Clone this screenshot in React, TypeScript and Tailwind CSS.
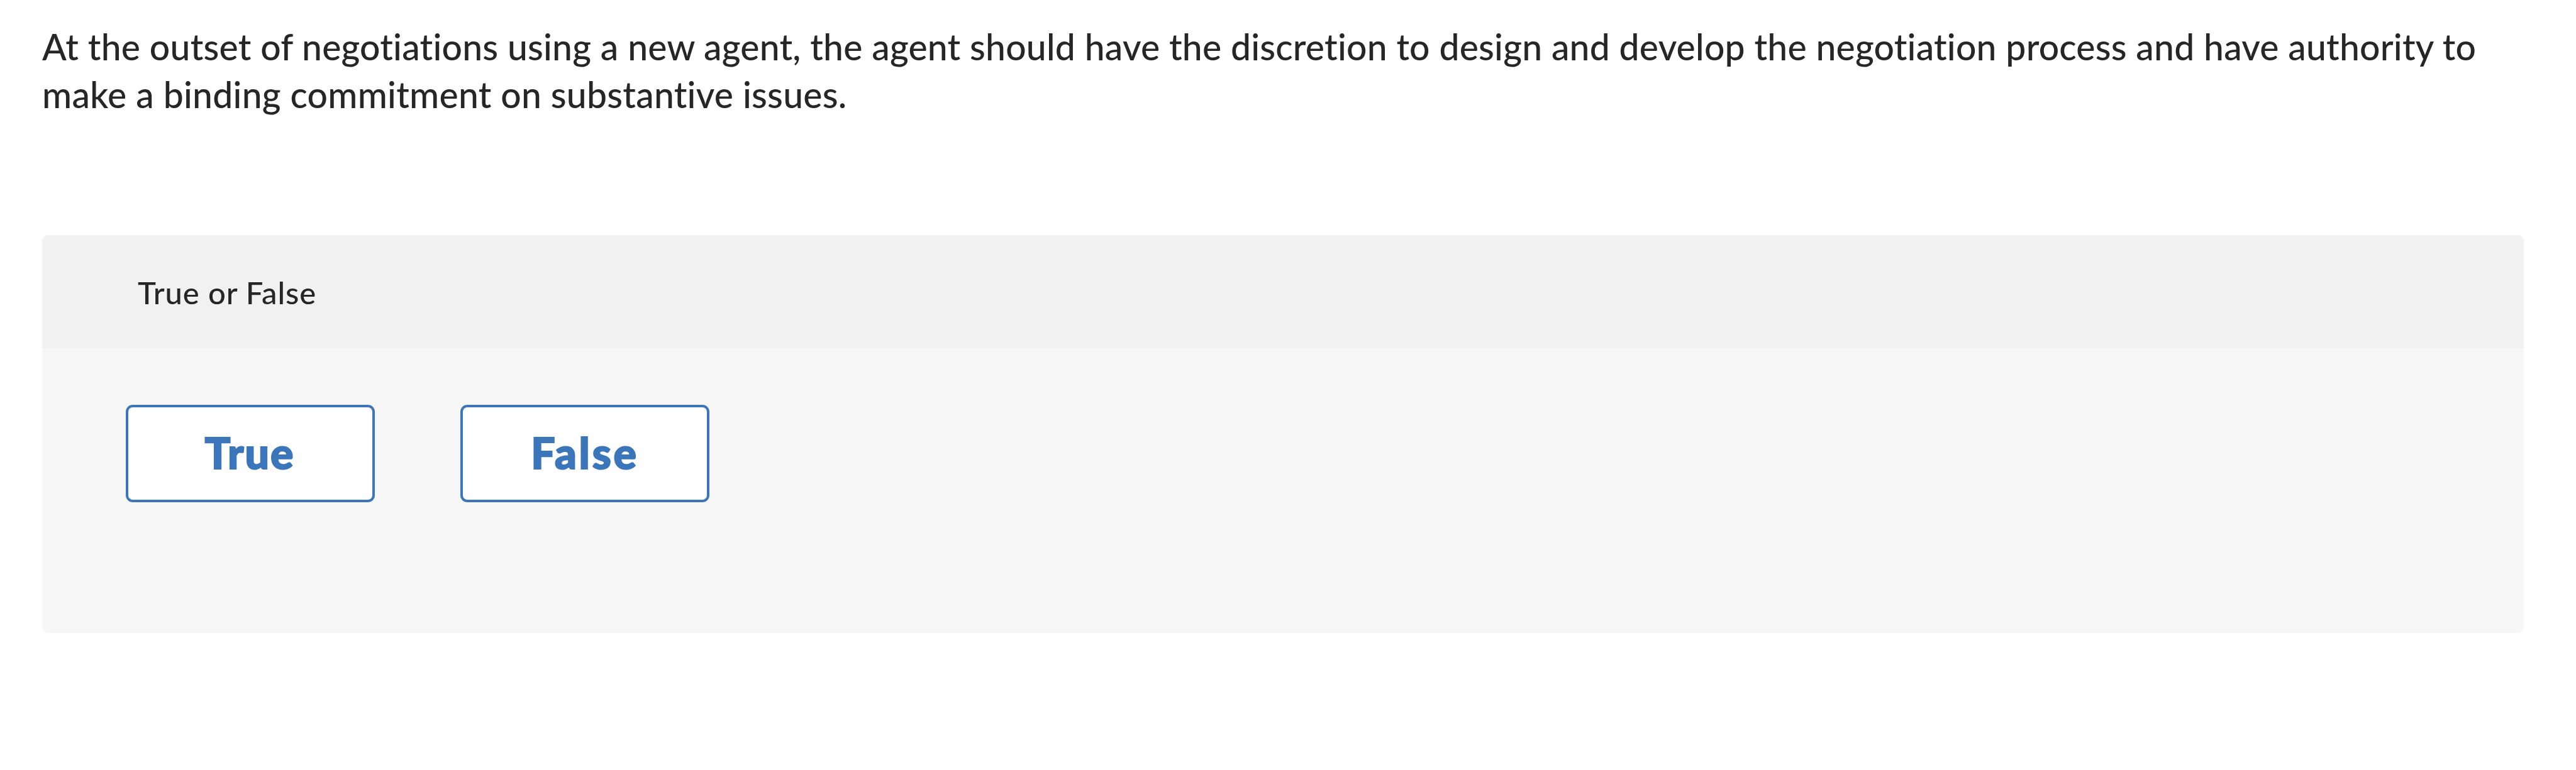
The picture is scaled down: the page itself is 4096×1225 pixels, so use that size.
import { FC, ReactNode } from "react";
import clsx from "clsx";

type AnswerButtonProps = {
  children: ReactNode;
  textClass?: string;
};

const AnswerButton: FC<AnswerButtonProps> = ({ children, textClass }) => {
  return (
    <button
      type="button"
      className="flex h-[155px] w-[396px] items-center justify-center rounded-[11px] border-4 border-[#3b76ba] bg-white pb-[3px] text-[68px] leading-none font-black text-[#3b76ba] [-webkit-text-stroke:2px_#3b76ba] [stroke-linejoin:round]"
    >
      <span className={clsx("block", textClass)}>{children}</span>
    </button>
  );
};

const App: FC = () => {
  return (
    <main className="h-[1225px] w-[4096px] bg-white pt-[37px] pl-[67px] font-['Lato',sans-serif] text-[#262626] [font-variant-ligatures:none]">
      {/* Question */}
      <p className="h-[337px] text-[57px] leading-[75.5px] font-medium tracking-[0.23px] whitespace-nowrap">
        <span className="block">
          At the outset of negotiations using a new agent, the agent should have
          the discretion to design and develop the negotiation process and have
          authority to
        </span>
        <span className="block tracking-[0.27px]">
          make a binding commitment on substantive issues.
        </span>
      </p>

      {/* Answer panel */}
      <section className="h-[633px] w-[3946px] overflow-hidden rounded-[10px] bg-[#f6f6f6]">
        <div className="flex h-[180px] items-center bg-[#f1f1f1] pt-[3px] pl-[152px] text-[49px] font-medium tracking-[0.9px]">
          True or False
        </div>

        <div className="flex gap-[136px] pt-[90px] pl-[133px]">
          <AnswerButton textClass="tracking-[2px] pr-[2px]">True</AnswerButton>
          <AnswerButton textClass="tracking-[3.8px]">False</AnswerButton>
        </div>
      </section>
    </main>
  );
};

export default App;
